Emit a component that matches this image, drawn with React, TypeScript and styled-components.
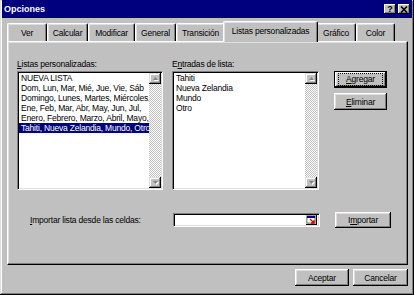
import styled, { createGlobalStyle } from "styled-components";

const GlobalStyle = createGlobalStyle`
  html, body {
    margin: 0;
    padding: 0;
    background: #c0c0c0;
  }
  body {
    font-family: "Liberation Sans", Arial, sans-serif;
    font-size: 8.5px;
    letter-spacing: -0.2px;
    color: #000;
  }
  * {
    box-sizing: border-box;
  }
`;

const Window = styled.div`
  width: 414px;
  height: 295px;
  background: #c0c0c0;
  display: flex;
  flex-direction: column;
  padding: 0 2px 2px 2px;
  box-shadow: inset -1px -1px #000, inset 1px 1px #dfdfdf,
    inset -2px -2px #808080, inset 2px 2px #fff;
`;

const TitleBar = styled.div`
  height: 18px;
  background: #00007e;
  display: flex;
  align-items: center;
  padding: 0 2px 0 2px;
`;

const Title = styled.div`
  flex: 1;
  color: #fff;
  font-weight: bold;
  font-size: 9px;
  letter-spacing: 0;
`;

const CaptionButton = styled.div`
  width: 12px;
  height: 10px;
  margin-left: 2px;
  background: #c0c0c0;
  display: flex;
  align-items: center;
  justify-content: center;
  font-weight: bold;
  font-size: 9px;
  line-height: 10px;
  letter-spacing: 0;
  box-shadow: inset -1px -1px #000, inset 1px 1px #fff,
    inset -2px -2px #808080;
`;

const Body = styled.div`
  display: flex;
  flex-direction: column;
  padding: 3px 4px 0 5px;
`;

const TabStrip = styled.div`
  display: flex;
  align-items: flex-end;
  height: 20px;
  position: relative;
  z-index: 1;
`;

const Tab = styled.div<{ $w: number; $active?: boolean }>`
  position: relative;
  z-index: ${(p) => (p.$active ? 2 : 1)};
  width: ${(p) => p.$w}px;
  height: ${(p) => (p.$active ? 21 : 18)}px;
  margin: ${(p) => (p.$active ? "0 -2px -1px -2px" : "0")};
  background: #c0c0c0;
  border: 1px solid;
  border-color: #fff #000 transparent #fff;
  border-bottom: none;
  border-radius: 2px 2px 0 0;
  box-shadow: inset -1px 0 #808080, inset 1px 1px #dfdfdf;
  text-align: center;
  white-space: nowrap;
  line-height: 10px;
  padding-top: 4px;
`;

const Panel = styled.div`
  height: 224px;
  border: 1px solid;
  border-color: #fff #000 #000 #fff;
  box-shadow: inset -1px -1px #808080, inset 1px 1px #dfdfdf;
  padding: 17px 0 0 9px;
  display: flex;
  flex-direction: column;
`;

const ListsRow = styled.div`
  display: flex;
  align-items: flex-start;
`;

const Column = styled.div<{ $w: number; $gap?: number }>`
  width: ${(p) => p.$w}px;
  margin-left: ${(p) => p.$gap ?? 0}px;
  display: flex;
  flex-direction: column;
`;

const Label = styled.div`
  height: 10px;
  line-height: 10px;
  margin-bottom: 2px;
  white-space: nowrap;
`;

const ListBox = styled.div`
  height: 119px;
  background: #fff;
  border: 1px solid;
  border-color: #808080 #fff #fff #808080;
  box-shadow: inset 1px 1px #000, inset -1px -1px #dfdfdf;
  padding: 1px;
  display: flex;
`;

const Items = styled.div`
  flex: 1;
  min-width: 0;
  overflow: hidden;
`;

const Item = styled.div<{ $selected?: boolean }>`
  height: 10px;
  line-height: 10px;
  padding-left: 2px;
  white-space: nowrap;
  overflow: hidden;
  background: ${(p) => (p.$selected ? "#000080" : "transparent")};
  color: ${(p) => (p.$selected ? "#fff" : "#000")};
`;

const ScrollBar = styled.div`
  width: 12px;
  display: flex;
  flex-direction: column;
`;

const ScrollTrack = styled.div`
  flex: 1;
  background: repeating-conic-gradient(#c0c0c0 0 25%, #fff 0 50%) 0 0 / 2px
    2px;
`;

const ScrollButton = styled.div`
  width: 12px;
  height: 11px;
  background: #c0c0c0;
  display: flex;
  align-items: center;
  justify-content: center;
  box-shadow: inset -1px -1px #000, inset 1px 1px #dfdfdf,
    inset -2px -2px #808080, inset 2px 2px #fff;
`;

const Button = styled.button<{ $w: number; $h?: number; $default?: boolean }>`
  width: ${(p) => p.$w}px;
  height: ${(p) => p.$h ?? 17}px;
  padding: 0;
  margin: 0;
  background: #c0c0c0;
  font: inherit;
  letter-spacing: inherit;
  color: #000;
  border: ${(p) => (p.$default ? "1px solid #000" : "none")};
  box-shadow: inset -1px -1px #000, inset 1px 1px #fff,
    inset -2px -2px #808080, inset 2px 2px #dfdfdf;
  display: flex;
  align-items: center;
  justify-content: center;
`;

const Focus = styled.span`
  outline: 1px dotted #000;
  outline-offset: 1px;
  padding: 0 6px;
  line-height: 9px;
`;

const ButtonColumn = styled.div`
  margin-left: 15px;
  margin-top: 12px;
  display: flex;
  flex-direction: column;
  gap: 5px;
`;

const ImportRow = styled.div`
  margin-top: 22px;
  height: 16px;
  display: flex;
  align-items: center;
`;

const ImportLabel = styled.div`
  margin-left: 13px;
  width: 143px;
  white-space: nowrap;
`;

const RefInput = styled.div`
  width: 147px;
  height: 14px;
  margin-right: 15px;
  background: #fff;
  border: 1px solid;
  border-color: #808080 #fff #fff #808080;
  box-shadow: inset 1px 1px #000, inset -1px -1px #dfdfdf;
  display: flex;
  justify-content: flex-end;
  align-items: center;
  padding-right: 2px;
`;

const Footer = styled.div`
  margin-top: 4px;
  display: flex;
  justify-content: flex-end;
  gap: 4px;
`;

const Arrow = ({ down }: { down?: boolean }) => (
  <svg width="7" height="5" viewBox="0 0 7 5">
    {down ? (
      <>
        <path d="M1 1h5L3.5 4z" fill="#fff" transform="translate(1 1)" />
        <path d="M1 1h5L3.5 4z" fill="#808080" />
      </>
    ) : (
      <>
        <path d="M3.5 1L6 4H1z" fill="#fff" transform="translate(1 1)" />
        <path d="M3.5 1L6 4H1z" fill="#808080" />
      </>
    )}
  </svg>
);

const Scroll = () => (
  <ScrollBar>
    <ScrollButton>
      <Arrow />
    </ScrollButton>
    <ScrollTrack />
    <ScrollButton>
      <Arrow down />
    </ScrollButton>
  </ScrollBar>
);

const RefEditIcon = () => (
  <svg width="11" height="10" viewBox="0 0 11 10">
    <rect x="0" y="0" width="11" height="10" fill="#c0c0c0" />
    <rect x="1" y="1" width="8" height="7" fill="#fff" stroke="#808080" strokeWidth="1" />
    <rect x="1" y="1" width="8" height="2" fill="#000080" />
    <path d="M4 4l4 4M8 5v3H5" stroke="#e00000" strokeWidth="1.3" fill="none" />
    <path d="M0 9.5h11M10.5 0v10" stroke="#000" strokeWidth="1" />
  </svg>
);

const CloseGlyph = () => (
  <svg width="8" height="7" viewBox="0 0 8 7">
    <path d="M1 0.5l6 6M7 0.5l-6 6" stroke="#000" strokeWidth="1.6" />
  </svg>
);

const tabs: [string, number][] = [
  ["Ver", 40],
  ["Calcular", 41],
  ["Modificar", 47],
  ["General", 41],
  ["Transición", 49],
  ["Listas personalizadas", 95],
  ["Gráfico", 40],
  ["Color", 39],
];

// the list box is narrow, so only the part that fits is shown
const customLists = [
  "NUEVA LISTA",
  "Dom, Lun, Mar, Mié, Jue, Vie, Sáb",
  "Domingo, Lunes, Martes, Miércoles,",
  "Ene, Feb, Mar, Abr, May, Jun, Jul,",
  "Enero, Febrero, Marzo, Abril, Mayo,",
  "Tahiti, Nueva Zelandia, Mundo, Otro",
];

const entries = ["Tahiti", "Nueva Zelandia", "Mundo", "Otro"];

export default function App() {
  return (
    <>
      <GlobalStyle />
      <Window>
        <TitleBar>
          <Title>Opciones</Title>
          <CaptionButton>?</CaptionButton>
          <CaptionButton>
            <CloseGlyph />
          </CaptionButton>
        </TitleBar>
        <Body>
          <TabStrip>
            {tabs.map(([name, w]) => (
              <Tab key={name} $w={w} $active={name === "Listas personalizadas"}>
                {name}
              </Tab>
            ))}
          </TabStrip>
          <Panel>
            <ListsRow>
              <Column $w={146}>
                <Label>
                  <u>L</u>istas personalizadas:
                </Label>
                <ListBox>
                  <Items>
                    {customLists.map((l, i) => (
                      <Item key={l} $selected={i === 5}>
                        {l}
                      </Item>
                    ))}
                  </Items>
                  <Scroll />
                </ListBox>
              </Column>
              <Column $w={147} $gap={9}>
                <Label>
                  E<u>n</u>tradas de lista:
                </Label>
                <ListBox>
                  <Items>
                    {entries.map((e) => (
                      <Item key={e}>{e}</Item>
                    ))}
                  </Items>
                  <Scroll />
                </ListBox>
              </Column>
              <ButtonColumn>
                <Button $w={53} $default>
                  <Focus>
                    <u>A</u>gregar
                  </Focus>
                </Button>
                <Button $w={53}>
                  <span>
                    <u>E</u>liminar
                  </span>
                </Button>
              </ButtonColumn>
            </ListsRow>
            <ImportRow>
              <ImportLabel>
                <u>I</u>mportar lista desde las celdas:
              </ImportLabel>
              <RefInput>
                <RefEditIcon />
              </RefInput>
              <Button $w={56} $h={16}>
                <span>
                  I<u>m</u>portar
                </span>
              </Button>
            </ImportRow>
          </Panel>
          <Footer>
            <Button $w={54}>Aceptar</Button>
            <Button $w={55}>Cancelar</Button>
          </Footer>
        </Body>
      </Window>
    </>
  );
}
